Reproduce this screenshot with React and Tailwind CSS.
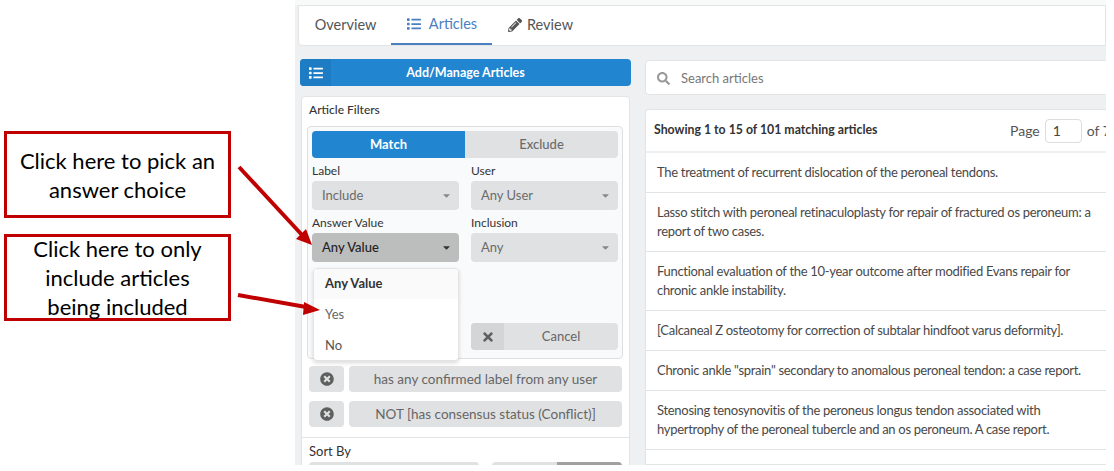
import { FaList, FaPencilAlt, FaSearch, FaTimes, FaTimesCircle, FaCaretDown } from 'react-icons/fa';

const articles = [
    ['The treatment of recurrent dislocation of the peroneal tendons.'],
    ['Lasso stitch with peroneal retinaculoplasty for repair of fractured os peroneum: a', 'report of two cases.'],
    ['Functional evaluation of the 10-year outcome after modified Evans repair for', 'chronic ankle instability.'],
    ['[Calcaneal Z osteotomy for correction of subtalar hindfoot varus deformity].'],
    ['Chronic ankle "sprain" secondary to anomalous peroneal tendon: a case report.'],
    ['Stenosing tenosynovitis of the peroneus longus tendon associated with', 'hypertrophy of the peroneal tubercle and an os peroneum. A case report.'],
];

function Callout({ lines, className }) {
    return (
        <div className={`w-[227px] h-[87px] border-[3px] border-[#c00000] flex flex-col justify-center items-center text-[22px] leading-[29px] text-black bg-white ${className}`}>
            {lines.map(line => <div key={line}>{line}</div>)}
        </div>
    );
}

function Field({ label, value, active }) {
    return (
        <div>
            <div className="h-[16px] leading-[15px] text-[12px] text-[#333]">{label}</div>
            <div className={`mt-[2px] h-[29px] rounded-[4px] flex items-center justify-between pl-[10px] pr-[7px] text-[13px] ${active ? 'bg-[#bcbdbd] text-[#222] font-medium' : 'bg-[#e0e1e2] text-[#6b6b6b]'}`}>
                <span>{value}</span>
                <FaCaretDown className={`w-[11px] h-[11px] ${active ? 'text-[#333]' : 'text-[#888]'}`} />
            </div>
        </div>
    );
}

function FilterChip({ text }) {
    return (
        <div className="flex gap-[5px] h-[26px]">
            <div className="w-[35px] rounded-[4px] bg-[#e0e1e2] flex items-center justify-center">
                <FaTimesCircle className="w-[14px] h-[14px] text-[#5f5f5f]" />
            </div>
            <div className="flex-1 rounded-[4px] bg-[#e0e1e2] flex items-center justify-center text-[13.5px] text-[#666]">{text}</div>
        </div>
    );
}

function FilterPanel() {
    return (
        <div className="mt-[10px] mr-[1px] h-[400px] ml-px bg-white border border-[#e3e4e6] rounded-t-[4px] overflow-hidden">
            <div className="h-[25px] pl-[7px] pt-[5px] text-[12px] leading-[15px] font-medium text-[#333]">Article Filters</div>
            <div className="relative ml-[5px] mr-[6px] mt-[4px] h-[233px] px-[4px] pt-[4px] bg-[#f9fafb] border border-[#dedfe1] rounded-[4px]">
                <div className="flex h-[27px] text-[13px] font-bold">
                    <div className="flex-1 bg-[#2185d0] text-white rounded-l-[4px] flex items-center justify-center">Match</div>
                    <div className="flex-1 bg-[#e0e1e2] text-[#6b6b6b] font-medium rounded-r-[4px] flex items-center justify-center">Exclude</div>
                </div>
                <div className="mt-[5px] grid grid-cols-2 gap-x-[12px] gap-y-[5px]">
                    <Field label="Label" value="Include" />
                    <Field label="User" value="Any User" />
                    <Field label="Answer Value" value="Any Value" active />
                    <Field label="Inclusion" value="Any" />
                </div>
                <div className="mt-[61px] grid grid-cols-2 gap-x-[12px]">
                    <div />
                    <div className="h-[27px] flex rounded-[4px] overflow-hidden bg-[#e0e1e2] text-[13px] text-[#666]">
                        <div className="w-[33px] bg-[#d4d5d6] flex items-center justify-center">
                            <FaTimes className="w-[14px] h-[14px] text-[#5f5f5f]" />
                        </div>
                        <div className="flex-1 flex items-center justify-center">Cancel</div>
                    </div>
                </div>
                <div className="absolute left-[5px] top-[141px] w-[146px] h-[93px] bg-white rounded-[4px] border border-[#e4e4e4] shadow-[0_2px_4px_rgba(0,0,0,0.15)] overflow-hidden text-[13px]">
                    <div className="h-[30px] bg-[#fafafa] flex items-center pl-[11px] font-bold text-[#333]">Any Value</div>
                    <div className="h-[31px] flex items-center pl-[11px] text-[#666]">Yes</div>
                    <div className="h-[31px] flex items-center pl-[11px] text-[#555]">No</div>
                </div>
            </div>
            <div className="mt-[7px] mx-[7px] flex flex-col gap-[9px]">
                <FilterChip text="has any confirmed label from any user" />
                <FilterChip text="NOT [has consensus status (Conflict)]" />
            </div>
            <div className="mt-[10px] border-t border-[#e3e4e6] px-[7px] pt-[6px]">
                <div className="text-[13px] leading-[15px] text-[#333]">Sort By</div>
                <div className="mt-[3px] flex justify-between">
                    <div className="w-[170px] h-[29px] rounded-[4px] bg-[#e0e1e2]" />
                    <div className="w-[130px] h-[29px] rounded-[4px] overflow-hidden flex">
                        <div className="w-[65px] bg-[#e0e1e2]" />
                        <div className="flex-1 bg-[#a0a0a0]" />
                    </div>
                </div>
            </div>
        </div>
    );
}

function ArticleList() {
    return (
        <div className="mt-[14px] bg-white border border-[#e3e4e6] rounded-tl-[4px] -mr-[20px] flex-1">
            <div className="h-[43px] flex items-center pl-[8px] pr-[20px] border-b-2 border-[#eeeff0]">
                <div className="text-[12.3px] font-bold text-[#333] whitespace-nowrap">Showing 1 to 15 of 101 matching articles</div>
                <div className="ml-auto w-[95px] shrink-0 flex items-center text-[14px] text-[#555] whitespace-nowrap">
                    <span>Page</span>
                    <div className="ml-[5px] w-[37px] h-[24px] shrink-0 border border-[#dcddde] rounded-[4px] flex items-center pl-[7px] text-[#444] bg-white">1</div>
                    <span className="ml-[5px]">of 7</span>
                </div>
            </div>
            {articles.map(lines => (
                <div key={lines[0]} className="border-b border-[#e2e3e5] pl-[11px] py-[10px] text-[13px] tracking-[-0.3px] leading-[19px] text-[#484848]">
                    {lines.map(line => <div key={line}>{line}</div>)}
                </div>
            ))}
        </div>
    );
}

export default function App() {
    return (
        <div className="relative w-[1114px] h-[471px] bg-white flex overflow-hidden font-['Lato',sans-serif]">
            <div className="w-[295px] shrink-0 pt-[131px] pl-[4px]">
                <Callout lines={['Click here to pick an', 'answer choice']} />
                <Callout lines={['Click here to only', 'include articles', 'being included']} className="mt-[16px]" />
            </div>

            <div className="w-[811px] h-[465px] bg-[#eff0f2] overflow-hidden">
                <div className="h-[5px] bg-[#f8f9f9]" />
                <div className="ml-[3px] h-[41px] bg-white border border-[#e3e4e6] rounded-bl-[4px] flex items-end pl-[1px] text-[14.5px]">
                    <div className="w-[91px] h-[39px] pb-[2px] flex items-center justify-center text-[#555]">Overview</div>
                    <div className="w-[101px] h-[39px] pb-[1px] pl-px flex items-center justify-center gap-[8px] text-[#4a7fc0] border-b-2 border-[#4a7fc0]">
                        <FaList className="w-[14px] h-[14px]" /> Articles
                    </div>
                    <div className="ml-[16px] h-[39px] pb-[2px] flex items-center gap-[5px] text-[#555]">
                        <FaPencilAlt className="w-[14px] h-[14px]" /> Review
                    </div>
                </div>

                <div className="flex h-[419px] pl-[5px] pt-[13px]">
                    <div className="w-[331px] shrink-0">
                        <div className="h-[27px] rounded-[4px] bg-[#2185d0] flex text-white text-[12.5px] font-bold overflow-hidden">
                            <div className="w-[31px] bg-[#1e7cc4] flex items-center justify-center">
                                <FaList className="w-[14px] h-[14px]" />
                            </div>
                            <div className="flex-1 pr-[31px] pt-px flex items-center justify-center">Add/Manage Articles</div>
                        </div>
                        <FilterPanel />
                    </div>

                    <div className="ml-[14px] pt-px flex-1 flex flex-col">
                        <div className="h-[35px] -mr-[20px] bg-white border border-[#e3e4e6] rounded-l-[4px] flex items-center pl-[11px] pt-[2px] text-[13px] text-[#777]">
                            <FaSearch className="w-[13px] h-[13px] text-[#999]" />
                            <span className="ml-[11px]">Search articles</span>
                        </div>
                        <ArticleList />
                    </div>
                </div>
            </div>

            <svg className="absolute left-0 top-0 pointer-events-none" width="1114" height="471" viewBox="0 0 1114 471">
                <line x1="239" y1="167" x2="303" y2="236" stroke="#c00000" strokeWidth="4" />
                <polygon points="312,245 296,239 306,229" fill="#c00000" />
                <line x1="238" y1="295" x2="306" y2="307" stroke="#c00000" strokeWidth="4" />
                <polygon points="320,310 304,302 303,315" fill="#c00000" />
            </svg>
        </div>
    );
}
